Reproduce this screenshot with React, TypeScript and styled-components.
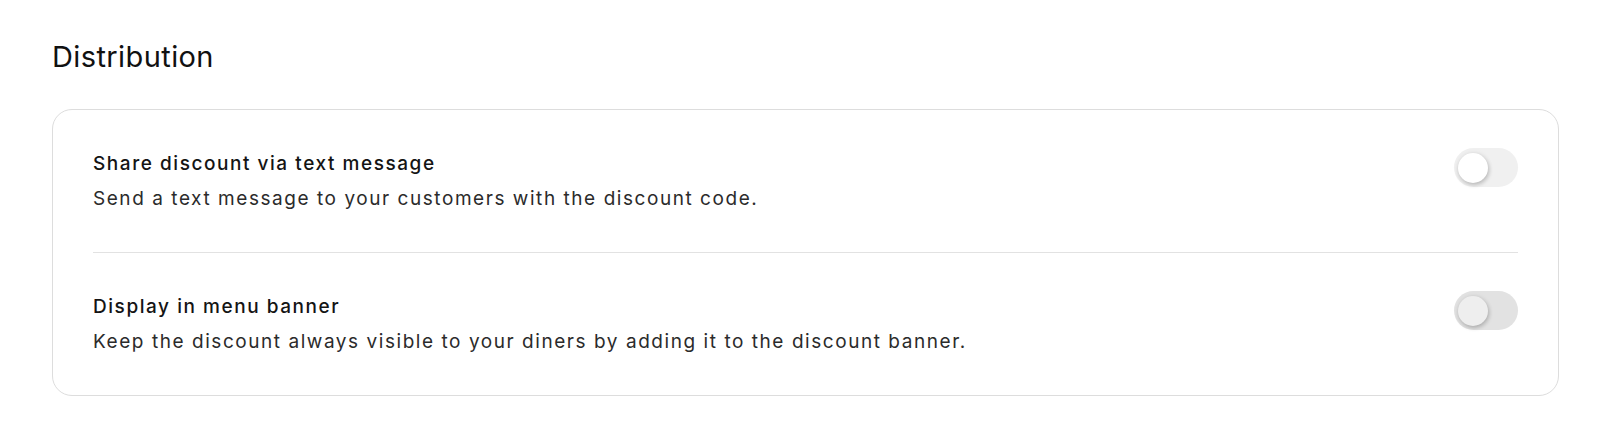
import { useState } from 'react';
import styled, { createGlobalStyle } from 'styled-components';

interface SettingRowProps {
  title: string;
  description: string;
  disabled?: boolean;
}

const rows: SettingRowProps[] = [
  {
    title: 'Share discount via text message',
    description: 'Send a text message to your customers with the discount code.',
  },
  {
    title: 'Display in menu banner',
    description:
      'Keep the discount always visible to your diners by adding it to the discount banner.',
    disabled: true,
  },
];

const SettingRow = ({ title, description, disabled = false }: SettingRowProps) => {
  const [checked, setChecked] = useState(false);

  return (
    <Row>
      <RowText>
        <RowTitle>{title}</RowTitle>
        <RowDescription>{description}</RowDescription>
      </RowText>
      <Switch
        type='button'
        role='switch'
        aria-checked={checked}
        aria-label={title}
        disabled={disabled}
        checked={checked}
        onClick={() => setChecked((prev) => !prev)}
      >
        <Knob checked={checked} disabled={disabled} />
      </Switch>
    </Row>
  );
};

const App = () => {
  return (
    <>
      <GlobalStyle />
      <Page>
        <Heading>Distribution</Heading>
        <Card>
          {rows.map((row, index) => (
            <div key={row.title}>
              {index > 0 && <Divider />}
              <SettingRow {...row} />
            </div>
          ))}
        </Card>
      </Page>
    </>
  );
};

export default App;

const GlobalStyle = createGlobalStyle`
  * {
    box-sizing: border-box;
  }
  body {
    margin: 0;
    background: #ffffff;
    font-family: Inter, 'Noto Sans', sans-serif;
    -webkit-font-smoothing: antialiased;
  }
`;

const Page = styled.div`
  display: flex;
  flex-direction: column;
  padding: 40px 41px 36px 52px;
`;

const Heading = styled.h2`
  margin: 0 0 35px 0;
  color: #111111;
  font-size: 29px;
  font-weight: 400;
  line-height: 34px;
  letter-spacing: 0.4px;
`;

const Card = styled.div`
  display: flex;
  flex-direction: column;
  padding: 40px;
  border: 1px solid #dddddd;
  border-radius: 20px;
  background: #ffffff;
`;

const Divider = styled.div`
  height: 1px;
  margin: 40px 0;
  background: #e2e2e2;
`;

const Row = styled.div`
  display: flex;
  justify-content: space-between;
  align-items: flex-start;
  gap: 24px;
`;

const RowText = styled.div`
  display: flex;
  flex-direction: column;
  gap: 8px;
`;

const RowTitle = styled.div`
  color: #141414;
  font-size: 19px;
  font-weight: 500;
  line-height: 27px;
  letter-spacing: 1.55px;
`;

const RowDescription = styled.div`
  color: #2b2b2b;
  font-size: 19px;
  font-weight: 400;
  line-height: 27px;
  letter-spacing: 1.55px;
`;

const Switch = styled.button<{ checked: boolean }>`
  position: relative;
  flex-shrink: 0;
  width: 64px;
  height: 39px;
  margin-top: -2px;
  padding: 0;
  border: none;
  border-radius: 20px;
  background: ${({ checked, disabled }) =>
    checked ? '#111111' : disabled ? '#e2e2e2' : '#f0f0f0'};
  cursor: pointer;

  &:disabled {
    cursor: default;
  }
`;

const Knob = styled.span<{ checked: boolean; disabled?: boolean }>`
  position: absolute;
  top: 5px;
  left: 4px;
  width: 30px;
  height: 30px;
  border-radius: 50%;
  background: ${({ disabled }) => (disabled ? '#eeeeee' : '#ffffff')};
  box-shadow: 1px 2px 4px rgba(0, 0, 0, 0.22), 0 0 6px rgba(0, 0, 0, 0.05);
  transition: transform 0.2s;
  transform: ${({ checked }) => (checked ? 'translateX(26px)' : 'translateX(0)')};
`;
